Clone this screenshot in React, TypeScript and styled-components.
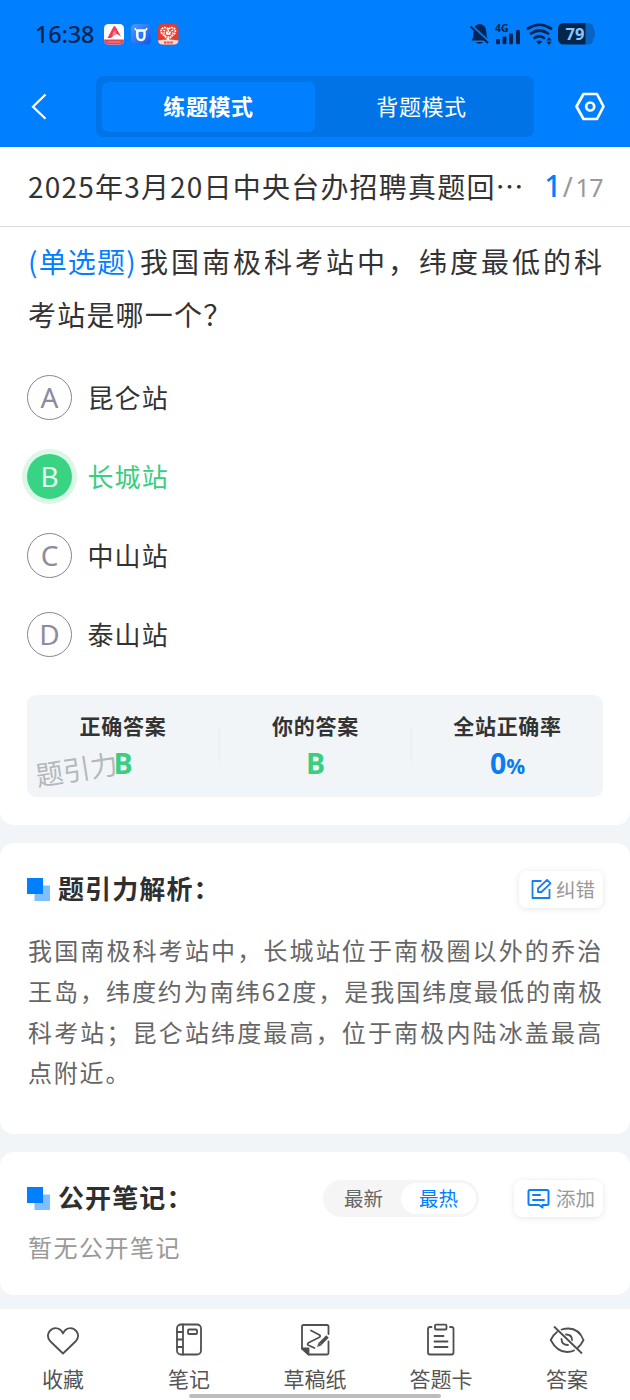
import React from "react";
import styled, { createGlobalStyle } from "styled-components";

const GlobalStyle = createGlobalStyle`
  * { box-sizing: border-box; }
  body {
    margin: 0;
    background: #f1f5f8;
    font-family: "Noto Sans CJK SC", sans-serif;
    color: #333;
  }
  svg { display: block; flex: none; }
`;

const Screen = styled.div`
  width: 630px;
  height: 1400px;
  display: flex;
  flex-direction: column;
  background: #f1f5f8;
  overflow: hidden;
`;

const Header = styled.header`
  height: 147px;
  flex: none;
  background: #0080ff;
`;

const StatusBar = styled.div`
  height: 68px;
  padding: 0 35px;
  display: flex;
  align-items: center;
`;

const Clock = styled.span`
  width: 69px;
  font: 500 23.5px/34px "Noto Sans", sans-serif;
  letter-spacing: -0.2px;
  color: #06244f;
  white-space: nowrap;
`;

const AppIcons = styled.div`
  display: flex;
  gap: 7px;
`;

const StatusRight = styled.div`
  margin-left: auto;
  display: flex;
  align-items: center;
`;

const NavBar = styled.div`
  height: 61px;
  margin-top: 8px;
  padding: 0 25px 0 31px;
  display: flex;
  align-items: center;
`;

const ModeTabs = styled.div`
  width: 438px;
  height: 61px;
  margin: 0 40px 0 49px;
  padding: 5.5px 6px;
  display: flex;
  border-radius: 7px;
  background: #0074e7;
`;

const ModeTab = styled.div<{ $active?: boolean }>`
  width: 214px;
  height: 50px;
  border-radius: 7px;
  background: ${(p) => (p.$active ? "#0080ff" : "transparent")};
  font-size: 22px;
  letter-spacing: 0.6px;
  font-weight: ${(p) => (p.$active ? 700 : 400)};
  line-height: 47px;
  text-align: center;
  color: #fff;
`;

const TitleBar = styled.div`
  height: 80px;
  flex: none;
  padding: 0 27px 2px 28px;
  display: flex;
  align-items: center;
  justify-content: space-between;
  background: #fff;
  border-bottom: 1px solid #dcdcdc;
`;

const PaperTitle = styled.div`
  font-size: 28px;
  letter-spacing: 1.2px;
  line-height: 40px;
  white-space: nowrap;
`;

const Progress = styled.div`
  display: flex;
  align-items: baseline;
  padding-top: 1px;
  font: 400 25px/40px "Noto Sans", sans-serif;
  letter-spacing: -0.5px;
  color: #999;
`;

const Current = styled.b`
  font-size: 30px;
  font-weight: 500;
  color: #0080ff;
  margin-right: 2px;
`;

const Slash = styled.span`
  font-size: 27px;
  margin-right: 3px;
`;

const Card = styled.section<{ $height: number; $flatTop?: boolean; $gap?: number }>`
  height: ${(p) => p.$height}px;
  flex: none;
  padding: 0 27px 0 28px;
  background: #fff;
  border-radius: ${(p) => (p.$flatTop ? "0 0 14px 14px" : "14px")};
  margin-bottom: ${(p) => p.$gap ?? 18}px;
`;

const Question = styled.h1`
  margin: 0;
  padding-top: 8px;
  font-size: 28px;
  font-weight: 400;
  line-height: 52.5px;
  letter-spacing: 1.2px;
`;

const QuestionLine = styled.span<{ $justify?: boolean }>`
  display: flex;
  justify-content: ${(p) => (p.$justify ? "space-between" : "flex-start")};
  white-space: nowrap;
`;

const Kind = styled.span`
  color: #0080ff;
`;

const Stem = styled.span`
  letter-spacing: 3px;
  margin-right: -2px;
`;

const Options = styled.ul`
  list-style: none;
  margin: 35px 0 0 -1px;
  padding: 0;
  display: flex;
  flex-direction: column;
  gap: 34px;
`;

const Option = styled.li<{ $correct?: boolean }>`
  height: 45px;
  display: flex;
  align-items: center;
  gap: 15.5px;
  font-size: 26px;
  letter-spacing: 1.1px;
  color: ${(p) => (p.$correct ? "#39ce80" : "#333")};
`;

const OptionText = styled.span`
  line-height: 40px;
  padding-bottom: 2px;
`;

const Letter = styled.span<{ $correct?: boolean }>`
  width: 45px;
  height: 45px;
  padding-bottom: 2px;
  border-radius: 50%;
  border: ${(p) => (p.$correct ? "0" : "1.5px solid #85859b")};
  background: ${(p) => (p.$correct ? "#38d483" : "#fff")};
  box-shadow: ${(p) => (p.$correct ? "0 0 0 5px #dcf7e8" : "none")};
  color: ${(p) => (p.$correct ? "#e6fbef" : "#8c8ca1")};
  display: flex;
  align-items: center;
  justify-content: center;
  font: 400 28px/1 "Noto Sans", sans-serif;
  letter-spacing: 0;
`;

const Summary = styled.div`
  position: relative;
  height: 102px;
  margin: 38px 0 0 -1px;
  display: flex;
  border-radius: 9px;
  background: #f2f5f8;
`;

const Stat = styled.div`
  flex: 1;
  padding-top: 14px;
  text-align: center;
  & + &::before {
    content: "";
    float: left;
    width: 1px;
    height: 38px;
    margin-top: 18px;
    background: #ebeff2;
  }
`;

const StatLabel = styled.div`
  font-size: 21px;
  font-weight: 700;
  line-height: 33px;
  letter-spacing: 0.7px;
`;

const StatValue = styled.div<{ $color: string }>`
  font: 700 28.5px/43px "Open Sans", sans-serif;
  color: ${(p) => p.$color};
  small {
    font-size: 21px;
  }
`;

const Watermark = styled.span`
  position: absolute;
  left: 8px;
  top: 53px;
  font-size: 27.5px;
  line-height: 40px;
  color: #b5b8ba;
  transform: rotate(-9deg);
`;

const SectionHead = styled.div`
  padding-top: 27px;
  margin-left: -1px;
  display: flex;
  align-items: center;
  height: 65px;
`;

const SectionTitle = styled.h2`
  margin: 0 auto 0 8px;
  padding-bottom: 2px;
  font-size: 26px;
  line-height: 38px;
  letter-spacing: 1.1px;
  font-weight: 700;
  color: #2f2f2f;
`;

const ActionButton = styled.div<{ $width: number; $gap: number }>`
  width: ${(p) => p.$width}px;
  height: 37px;
  display: flex;
  align-items: center;
  justify-content: flex-end;
  padding-right: 8px;
  gap: ${(p) => p.$gap}px;
  border-radius: 8px;
  box-shadow: 0 1px 6px rgba(0, 0, 0, 0.1);
  font-size: 19.5px;
  line-height: 29px;
  color: #999;
`;

const ActionText = styled.span`
  padding-bottom: 2px;
`;

const Analysis = styled.div`
  margin-top: 22px;
  font-size: 24px;
  line-height: 40.8px;
  color: #666;
`;

const AnalysisLine = styled.div<{ $spacing: number }>`
  letter-spacing: ${(p) => p.$spacing}px;
  white-space: nowrap;
`;

const SortSwitch = styled.div`
  width: 156px;
  height: 37px;
  margin-right: 35px;
  padding: 3px;
  display: flex;
  border-radius: 19px;
  background: #f5f5f5;
`;

const SortItem = styled.div<{ $active?: boolean }>`
  width: 75px;
  height: 31px;
  border-radius: 16px;
  background: ${(p) => (p.$active ? "#fff" : "transparent")};
  color: ${(p) => (p.$active ? "#0080ff" : "#666")};
  font-size: 19.5px;
  line-height: 29px;
  text-align: center;
`;

const Empty = styled.div`
  margin-top: 12px;
  font-size: 24px;
  letter-spacing: 1.5px;
  line-height: 36px;
  color: #999;
`;

const TabBar = styled.nav`
  position: relative;
  flex: 1;
  display: flex;
  background: #fff;
`;

const Tab = styled.div`
  flex: 1;
  display: flex;
  flex-direction: column;
  align-items: center;
  padding-top: 13px;
  font-size: 21px;
  line-height: 32px;
  color: #555;
  svg { margin-bottom: 4px; }
`;

const HomeIndicator = styled.div`
  position: absolute;
  left: 189px;
  bottom: 2px;
  width: 252px;
  height: 4px;
  border-radius: 2px;
  background: #bdbdbd;
`;

const SquaresIcon = () => (
  <svg width="23" height="23" viewBox="0 0 23 23">
    <rect x="7.5" y="7.5" width="15.5" height="15.5" fill="#80bfff" />
    <rect width="16" height="16" fill="#0080ff" />
  </svg>
);

const TabIcon = ({ children }: { children: React.ReactNode }) => (
  <svg width="36" height="36" viewBox="0 0 36 36" fill="none" stroke="#4f4f4f" strokeWidth="1.8" strokeLinecap="round" strokeLinejoin="round">
    {children}
  </svg>
);

const options = [
  { letter: "A", text: "昆仑站" },
  { letter: "B", text: "长城站", correct: true },
  { letter: "C", text: "中山站" },
  { letter: "D", text: "泰山站" },
];

const analysis = [
  { text: "我国南极科考站中，长城站位于南极圈以外的乔治", spacing: 2.15 },
  { text: "王岛，纬度约为南纬62度，是我国纬度最低的南极", spacing: 1.97 },
  { text: "科考站；昆仑站纬度最高，位于南极内陆冰盖最高", spacing: 2.15 },
  { text: "点附近。", spacing: 1.8 },
];

export default function App() {
  return (
    <Screen>
      <GlobalStyle />
      <Header>
        <StatusBar>
          <Clock>16:38</Clock>
          <AppIcons>
            <svg width="20" height="21" viewBox="0 0 20 21">
              <rect width="20" height="20.5" rx="4.5" fill="#fff" />
              <path d="M0 15.5h20v.5a4.5 4.5 0 0 1-4.5 4.5h-11A4.5 4.5 0 0 1 0 16z" fill="#e9434f" />
              <path d="M3.5 14 9 3.5q1.5-3 3 0L17 12.5l-4-2.500-3 1-3 3z" fill="#f23d56" />
              <path d="m8 11 3-5 1 4z" fill="#ff929c" />
              <path d="M3.500 18h13" stroke="#fff" strokeWidth=".8" opacity=".5" />
            </svg>
            <svg width="20" height="21" viewBox="0 0 20 21">
              <defs>
                <linearGradient id="bull" x1="0" y1="0" x2="1" y2="1">
                  <stop offset="0" stopColor="#4e9bff" />
                  <stop offset="1" stopColor="#0f57ee" />
                </linearGradient>
              </defs>
              <rect width="20" height="20.500" rx="4.500" fill="url(#bull)" />
              <path d="M6.300 6v6.500a3.600 3.600 0 0 0 7.200 0V6.500H6.300" fill="none" stroke="#fff" strokeWidth="2.400" />
              <path d="M4 4q.5 2.500 3 2.500M16 4q-.5 2.500-3 2.500" fill="none" stroke="#fff" strokeWidth="1.400" />
            </svg>
            <svg width="21" height="21" viewBox="0 0 21 21">
              <rect width="20.500" height="20.500" rx="4.500" fill="#e33c31" />
              <path d="M10.200 15.500 3.500 9c-2-5 4-7.500 6.700-3.500C13 1.500 19 4 17 9z" fill="#f04d3f" stroke="#fff" strokeWidth="1.700" strokeDasharray="2 .7" />
              <path d="m5.500 6 9 6m.5-6-9 6M10.200 6v9M5 9h10.500" stroke="#fff" strokeWidth="1.200" strokeDasharray="2 1" />
              <path d="M0 16.500q10-2 20.500 0-.5 4-4.500 4H4.500q-4 0-4.500-4z" fill="#ffd9c9" />
              <path d="M6 18.500h9" stroke="#d75346" strokeWidth="2" strokeDasharray="2.500 .6" />
            </svg>
          </AppIcons>
          <StatusRight>
            <svg width="126" height="24" viewBox="469 22 126 24" fill="#06244f">
              <path d="M471.500 40.500q0-1.500 1.500-2.500l.5-6c0-4.500 2-7.500 6-8 4.500.5 6.800 3.500 6.800 8l.7 6q1.500 1 1.500 2.500z" />
              <path d="M475.500 42h8q-4 3.500-8 0z" />
              <path d="m470 24.500 19 17.500" stroke="#0080ff" strokeWidth="3" />
              <path d="m470.500 26.500 17.500 16.500" stroke="#06244f" strokeWidth="2" />
              <text x="495" y="32" fontFamily="Noto Sans" fontSize="10.500" fontWeight="700">4G</text>
              <rect x="496" y="39" width="4" height="5.300" rx="1.200" />
              <rect x="502.500" y="36.500" width="4" height="7.800" rx="1.200" />
              <rect x="509" y="33.500" width="4" height="10.800" rx="1.200" />
              <rect x="516" y="30" width="4" height="14.300" rx="1.200" />
              <g fill="none" stroke="#06244f" strokeWidth="2.700" strokeLinecap="round">
                <path d="M528 28.500q11.500-7.500 23 0M531 33.500q8.500-6 17 0M534.500 38q5-3.500 9.500 0" />
              </g>
              <path d="M536 41.500q3.200-2 6.400 0l-3.200 3zM546.300 40.500l2.700-3.500 2.700 3.500zM546.300 41.700l2.700 3.300 2.700-3.300z" />
              <path d="M585 23h3q5 0 5.500 5 1.500 3 1.500 6t-1.500 5q-.5 5.500-5.500 5.500h-3z" fill="#0863c3" />
              <path d="M585.500 23v21.500H564q-6 0-6-6v-9.500q0-6 6-6z" fill="#04264b" />
              <text x="565.500" y="40" fontFamily="Noto Sans" fontSize="16.500" fontWeight="700" fill="#8ac5ff">79</text>
            </svg>
          </StatusRight>
        </StatusBar>
        <NavBar>
          <svg width="16" height="28" viewBox="0 0 16 28" fill="none" stroke="#fff" strokeWidth="2.200">
            <path d="M14.500 1.500 2 13.700l12.500 12" />
          </svg>
          <ModeTabs>
            <ModeTab $active>练题模式</ModeTab>
            <ModeTab>背题模式</ModeTab>
          </ModeTabs>
          <svg width="32" height="30" viewBox="0 0 32 30" fill="none" stroke="#fff" strokeWidth="2.700" strokeLinejoin="round">
            <path d="M9.500 2h13.500l6.500 12.500-6.500 12.500H9.500L2.500 14.500z" />
            <circle cx="16.200" cy="14.500" r="4" />
          </svg>
        </NavBar>
      </Header>

      <TitleBar>
        <PaperTitle>2025年3月20日中央台办招聘真题回⋯</PaperTitle>
        <Progress>
          <Current>1</Current>
          <Slash>/</Slash>
          <span>17</span>
        </Progress>
      </TitleBar>

      <Card $height={598} $flatTop>
        <Question>
          <QuestionLine $justify>
            <Kind>(单选题)</Kind>
            <Stem>我国南极科考站中，纬度最低的科</Stem>
          </QuestionLine>
          <QuestionLine>考站是哪一个？</QuestionLine>
        </Question>
        <Options>
          {options.map((o) => (
            <Option key={o.letter} $correct={o.correct}>
              <Letter $correct={o.correct}>{o.letter}</Letter>
              <OptionText>{o.text}</OptionText>
            </Option>
          ))}
        </Options>
        <Summary>
          <Watermark>题引力</Watermark>
          <Stat>
            <StatLabel>正确答案</StatLabel>
            <StatValue $color="#39ce80">B</StatValue>
          </Stat>
          <Stat>
            <StatLabel>你的答案</StatLabel>
            <StatValue $color="#39ce80">B</StatValue>
          </Stat>
          <Stat>
            <StatLabel>全站正确率</StatLabel>
            <StatValue $color="#0b7df0">
              0<small>%</small>
            </StatValue>
          </Stat>
        </Summary>
      </Card>

      <Card $height={291}>
        <SectionHead>
          <SquaresIcon />
          <SectionTitle>题引力解析：</SectionTitle>
          <ActionButton $width={84} $gap={4}>
            <svg width="21" height="21" viewBox="0 0 21 21" fill="none" stroke="#1681e8" strokeWidth="1.800">
              <path d="M10.500 2H1.500v17h17v-9M7 13v-3.500L16 .900l3.500 3.500-9 8.600z" strokeLinejoin="round" />
            </svg>
            <ActionText>纠错</ActionText>
          </ActionButton>
        </SectionHead>
        <Analysis>
          {analysis.map((l) => (
            <AnalysisLine key={l.text} $spacing={l.spacing}>{l.text}</AnalysisLine>
          ))}
        </Analysis>
      </Card>

      <Card $height={143} $gap={14}>
        <SectionHead>
          <SquaresIcon />
          <SectionTitle>公开笔记：</SectionTitle>
          <SortSwitch>
            <SortItem>最新</SortItem>
            <SortItem $active>最热</SortItem>
          </SortSwitch>
          <ActionButton $width={89} $gap={5.5}>
            <svg width="23" height="21" viewBox="0 0 23 21" fill="none" stroke="#0a80f5" strokeWidth="2" strokeLinejoin="round" strokeLinecap="round">
              <path d="M10.500 17H3q-1.500 0-1.500-1.500v-12Q1.500 2 3 2h17q1.500 0 1.500 1.500v12Q21.500 17 20 17h-4.500v2.500L12 17zM6 7h7M6 12h11" />
            </svg>
            <ActionText>添加</ActionText>
          </ActionButton>
        </SectionHead>
        <Empty>暂无公开笔记</Empty>
      </Card>

      <TabBar>
        <Tab>
          <TabIcon>
            <path d="M18 31.500 5 19C-.5 12 6.500 4.500 13 6.500c3 1 4.200 3 5 5 .8-2 2-4 5-5 6.500-2 13.500 5.500 8 12.500z" />
          </TabIcon>
          收藏
        </Tab>
        <Tab>
          <TabIcon>
            <rect x="6" y="2.500" width="24" height="30" rx="4" />
            <path d="M12 2.500v30M6 10h6M6 17.500h6M6 25h6" />
            <rect x="17" y="7.500" width="9" height="4.500" rx="1" />
          </TabIcon>
          笔记
        </Tab>
        <Tab>
          <TabIcon>
            <path d="M31.500 12V4.500q0-1.500-1.500-1.500H6.500Q5 3 5 4.500v22l7 6h18q1.500 0 1.500-1.500V19.500" />
            <path d="M5 26.500h6.500v6z" fill="#4f4f4f" />
            <path d="M14 8.500 22.500 13q1.500 1.500-.5 2.500l-10 5q-3 2 0 3l5.500 2.500" />
            <path d="m23.500 21.500 7-7" strokeWidth="3.600" strokeLinecap="butt" />
            <path d="m22 20.500-1.500 4 4-1.500z" fill="#4f4f4f" strokeWidth=".6" />
          </TabIcon>
          草稿纸
        </Tab>
        <Tab>
          <TabIcon>
            <path d="M8.500 5H7q-2 0-2 2v23.500q0 2 2 2h21.500q2 0 2-2V7q0-2-2-2H27" />
            <rect x="12" y="2.700" width="11.500" height="4.800" rx="1" />
            <path d="M11.500 14h9M11.500 19.500h13M11.500 25h13" />
          </TabIcon>
          答题卡
        </Tab>
        <Tab>
          <TabIcon>
            <path d="M8 10Q4 13 1.700 18 8 30 18 30q4 0 7-1.500M12.500 7.500q16-4.500 22 10.500-2.500 5-5.500 7.500M5.500 5 32.500 31M12.500 17q0 6 6.500 6M17 12.500q6 0 6 5.500" />
          </TabIcon>
          答案
        </Tab>
        <HomeIndicator />
      </TabBar>
    </Screen>
  );
}
